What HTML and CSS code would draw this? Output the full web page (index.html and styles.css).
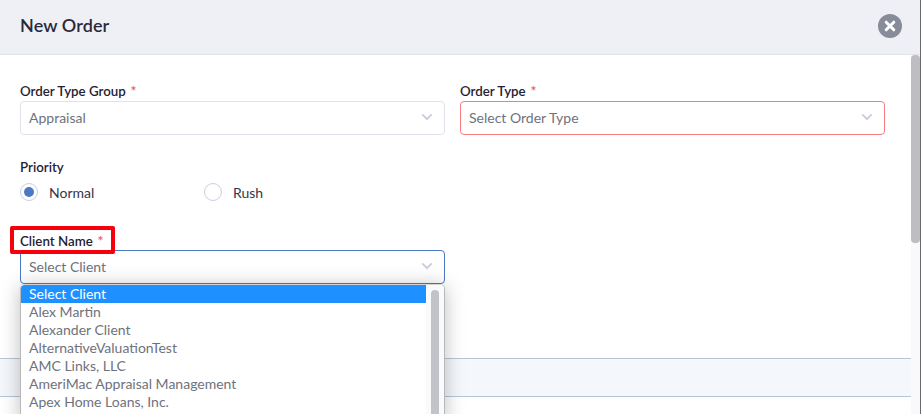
FILE: index.html
```html
<!DOCTYPE html>
<html lang="en">
<head>
<meta charset="utf-8">
<title>New Order</title>
<link rel="stylesheet" href="styles.css">
</head>
<body>
<div class="modal">
  <header class="modal-header">
    <h1 class="modal-title">New Order</h1>
    <button class="close" type="button" aria-label="Close">
      <svg width="24" height="24" viewBox="0 0 24 24"><circle cx="12" cy="12" r="12" fill="#878c9a"/><path d="M8.2 8.2l7.6 7.6M15.8 8.2l-7.6 7.6" stroke="#fff" stroke-width="3" stroke-linecap="round"/></svg>
    </button>
  </header>
  <div class="modal-main">
    <div class="scroll-area">
      <form class="form">
        <div class="row-two">
          <div class="field">
            <div class="label">Order Type Group <span class="req">*</span></div>
            <div class="select">
              <span>Appraisal</span>
              <svg class="chev" width="12" height="8" viewBox="0 0 12 8"><path d="M1.2 1.4L6 6l4.8-4.6" fill="none" stroke="#ccd0de" stroke-width="2"/></svg>
            </div>
          </div>
          <div class="field">
            <div class="label">Order Type <span class="req">*</span></div>
            <div class="select select-error">
              <span>Select Order Type</span>
              <svg class="chev" width="12" height="8" viewBox="0 0 12 8"><path d="M1.2 1.4L6 6l4.8-4.6" fill="none" stroke="#ccd0de" stroke-width="2"/></svg>
            </div>
          </div>
        </div>
        <div class="priority">
          <div class="label">Priority</div>
          <div class="radios">
            <div class="radio-item"><span class="radio radio-on"></span>Normal</div>
            <div class="radio-item"><span class="radio"></span>Rush</div>
          </div>
        </div>
        <div class="client">
          <div class="label label-marked">Client Name <span class="req">*</span><span class="marker"></span></div>
          <div class="select select-focus">
            <span>Select Client</span>
            <svg class="chev" width="12" height="8" viewBox="0 0 12 8"><path d="M1.2 1.4L6 6l4.8-4.6" fill="none" stroke="#ccd0de" stroke-width="2"/></svg>
          </div>
          <div class="dropdown">
            <ul class="options">
              <li class="option option-active">Select Client</li>
              <li class="option">Alex Martin</li>
              <li class="option">Alexander Client</li>
              <li class="option">AlternativeValuationTest</li>
              <li class="option">AMC Links, LLC</li>
              <li class="option">AmeriMac Appraisal Management</li>
              <li class="option">Apex Home Loans, Inc.</li>
            </ul>
            <div class="drop-track"><div class="drop-thumb"></div></div>
          </div>
        </div>
      </form>
      <div class="band"></div>
    </div>
    <div class="scrollbar"><div class="scroll-thumb"></div></div>
  </div>
</div>
</body>
</html>
```
FILE: styles.css
```css
html, body { margin: 0; padding: 0; height: 100%; overflow: hidden; background: #fff; }
body { font-family: Lato, "Open Sans", sans-serif; color: #1f2234; }
.modal { height: 414px; display: flex; flex-direction: column; overflow: hidden; border-right: 1px solid #6a6a6e; box-sizing: border-box; }
.modal-header { height: 55px; flex: none; box-sizing: border-box; background: #eff0f6; border-bottom: 1px solid #dfe3ec; display: flex; align-items: center; justify-content: space-between; padding: 0 18px 2px 20px; }
.modal-title { margin: 0 0 2px; font-size: 18px; font-weight: 600; letter-spacing: .1px; color: #282a3c; }
.close { border: 0; padding: 0; background: none; width: 24px; height: 24px; display: block; }
.close svg { display: block; }
.modal-main { flex: 1; min-height: 0; display: flex; }
.scroll-area { flex: 1; min-width: 0; display: flex; flex-direction: column; }
.form { height: 303px; flex: none; box-sizing: border-box; padding: 27px 0 0 20px; }
.row-two { display: grid; grid-template-columns: 425px 425px; column-gap: 15px; }
.label { font-size: 13.3px; line-height: 17px; height: 19px; font-weight: 600; color: #1f2234; white-space: nowrap; }
.req { color: #f4516c; margin-left: 1.5px; font-size: 14px; }
.select { height: 34px; box-sizing: border-box; border: 1px solid #e0e3ee; border-radius: 4px; display: flex; align-items: center; justify-content: space-between; padding: 0 11px 2px 8px; font-size: 14px; color: #6f727d; background: #fff; }
.select-error { border-color: #f77b80; }
.select-focus { border-color: #4d78c4; }
.priority { margin-top: 24px; }
.radios { display: flex; margin-top: 4px; }
.radio-item { width: 184px; display: flex; align-items: center; gap: 11px; font-size: 14px; height: 20px; color: #33364a; }
.radio { width: 18px; height: 18px; box-sizing: border-box; border: 1px solid #c9cfe0; border-radius: 50%; display: flex; align-items: center; justify-content: center; background: #fff; }
.radio-on::after { content: ""; width: 10px; height: 10px; border-radius: 50%; background: #4d78c4; }
.client { position: relative; width: 425px; margin-top: 30px; }
.label-marked { position: relative; height: 18px; }
.marker { position: absolute; left: -10px; top: -6px; width: 105px; height: 28px; box-sizing: border-box; border: 4px solid #f5000c; border-radius: 2px; }
.dropdown { position: absolute; left: 0; top: 52px; width: 425px; height: 140px; box-sizing: border-box; display: flex; background: #fff; border: 1px solid #b9b9bd; border-top-color: #d5d5d8; border-radius: 5px 5px 0 0; box-shadow: 0 2px 20px rgba(0,0,0,.26); z-index: 2; overflow: hidden; }
.options { list-style: none; margin: 0; padding: 0; flex: 1; min-width: 0; }
.option { height: 18px; line-height: 18px; padding-left: 8px; font-size: 14px; color: #6f727d; white-space: nowrap; }
.option-active { background: #1e90ff; color: #fff; }
.drop-track { width: 18px; flex: none; background: #f9fafc; padding: 5px 5px 0; box-sizing: border-box; }
.drop-thumb { width: 8px; height: 135px; border-radius: 4px 4px 0 0; background: #c2c3c8; }
.band { height: 39px; flex: none; box-sizing: border-box; background: #f4f7fb; border-top: 1px solid #b8c5d6; border-bottom: 1px solid #b8c5d6; }
.scrollbar { width: 9px; flex: none; background: #f9f9fb; }
.scroll-thumb { height: 188px; background: #bdbdc2; border-radius: 4px; }
```
